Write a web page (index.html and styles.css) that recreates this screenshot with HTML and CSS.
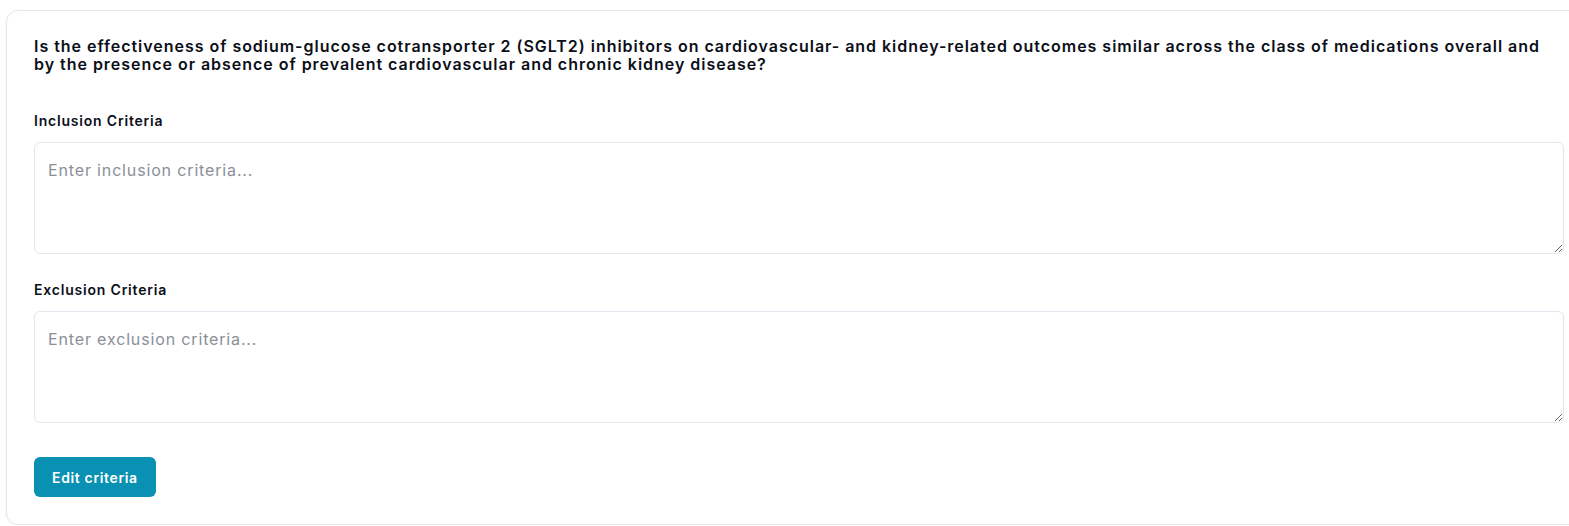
FILE: index.html
```html
<!DOCTYPE html>
<html lang="en">
<head>
    <meta charset="UTF-8">
    <meta name="viewport" content="width=device-width, initial-scale=1.0">
    <title>Screening Criteria</title>
    <link rel="stylesheet" href="styles.css">
</head>
<body>
    <div class="card">
        <div class="question">Is the effectiveness of sodium-glucose cotransporter 2 (SGLT2) inhibitors on cardiovascular- and kidney-related outcomes similar across the class of medications overall and by the presence or absence of prevalent cardiovascular and chronic kidney disease?</div>

        <div class="field">
            <label class="label" for="inclusion">Inclusion Criteria</label>
            <textarea class="criteria" id="inclusion" placeholder="Enter inclusion criteria..."></textarea>
        </div>

        <div class="field">
            <label class="label" for="exclusion">Exclusion Criteria</label>
            <textarea class="criteria" id="exclusion" placeholder="Enter exclusion criteria..."></textarea>
        </div>

        <div class="actions">
            <button class="btn">Edit criteria</button>
        </div>
    </div>
</body>
</html>
```

FILE: styles.css
```css
html, body {
    overflow: hidden;
}
body {
    margin: 0;
    padding: 10px 0 0 6px;
    background: #fff;
    font-family: Inter, "Noto Sans", sans-serif;
    color: #111827;
}
.card {
    width: 1586px;
    box-sizing: border-box;
    border: 1px solid #e5e7eb;
    border-radius: 12px;
    background: #fff;
    box-shadow: 0 1px 3px rgba(0,0,0,0.04);
    padding: 27px;
}
.question {
    font-size: 16px;
    font-weight: 600;
    line-height: 1.1;
    letter-spacing: 0.97px;
    color: #0b0f19;
    margin-bottom: 38px;
}
.field {
    display: flex;
    flex-direction: column;
    margin-bottom: 26px;
}
.label {
    font-size: 14px;
    font-weight: 600;
    line-height: 20px;
    letter-spacing: 0.8px;
    color: #0b0f19;
    margin-bottom: 11px;
}
.criteria {
    height: 112px;
    box-sizing: border-box;
    border: 1px solid #e2e6ee;
    border-radius: 6px;
    padding: 15px 13px;
    font-family: Inter, "Noto Sans", sans-serif;
    font-size: 16px;
    line-height: 24px;
    letter-spacing: 0.85px;
    color: #111827;
    resize: vertical;
    outline: none;
}
.criteria::placeholder {
    color: #8a8f98;
}
.actions {
    padding-top: 8px;
}
.btn {
    height: 40px;
    padding: 0 18px;
    border: none;
    border-radius: 6px;
    background: #0891b2;
    color: #fff;
    font-family: Inter, "Noto Sans", sans-serif;
    font-size: 14px;
    font-weight: 600;
    letter-spacing: 0.65px;
    cursor: pointer;
}
.btn:hover {
    background: #0e7490;
}
```
